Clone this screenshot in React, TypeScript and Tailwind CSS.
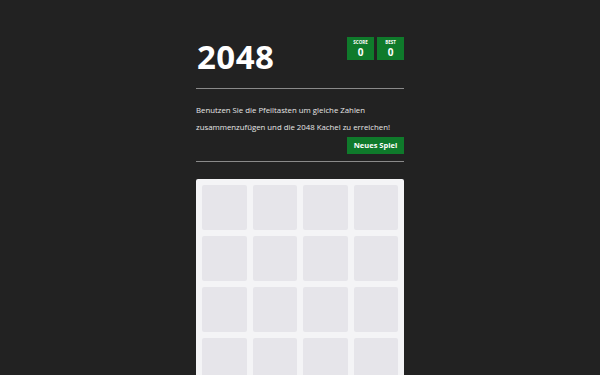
import React from "react";

export default function App() {
  const cells = Array.from({ length: 16 });
  return (
    <div className="min-h-screen w-full bg-[#222222] flex justify-center" style={{ fontFamily: '"Open Sans", "Liberation Sans", sans-serif' }}>
      <div className="w-[208px] pt-[37px]">
        <div className="flex justify-between items-start">
          <h1 className="text-white font-bold text-[33px] leading-none mt-[3px] ml-[1px] tracking-[0.5px]">2048</h1>
          <div className="flex gap-[3px]">
            <div className="bg-[#0f7a2b] w-[27px] h-[23px] flex flex-col items-center justify-center text-white">
              <div className="text-[4.5px] font-bold leading-none">SCORE</div>
              <div className="text-[10px] font-bold leading-none mt-[2px]">0</div>
            </div>
            <div className="bg-[#0f7a2b] w-[27px] h-[23px] flex flex-col items-center justify-center text-white">
              <div className="text-[4.5px] font-bold leading-none">BEST</div>
              <div className="text-[10px] font-bold leading-none mt-[2px]">0</div>
            </div>
          </div>
        </div>
        <div className="h-px bg-[#8a8a8a] mt-[15px]" />
        <div className="text-[#e6e6e6] text-[7.8px] leading-[17px] mt-[13px] whitespace-nowrap">
          <p>Benutzen Sie die Pfeiltasten um gleiche Zahlen</p>
          <p>zusammenzufügen und die 2048 Kachel zu erreichen!</p>
        </div>
        <div className="flex justify-end mt-[1px]">
          <button className="bg-[#0f7a2b] text-white font-bold text-[7.5px] w-[57px] h-[17px] flex items-center justify-center">Neues Spiel</button>
        </div>
        <div className="h-px bg-[#8a8a8a] mt-[7px]" />
        <div className="mt-[17px] bg-[#f4f4f6] rounded-[2px] p-[6px] grid grid-cols-4 gap-[6px]">
          {cells.map((_, i) => (
            <div key={i} className="bg-[#e6e5ea] rounded-[2px] h-[45px]" />
          ))}
        </div>
      </div>
    </div>
  );
}
